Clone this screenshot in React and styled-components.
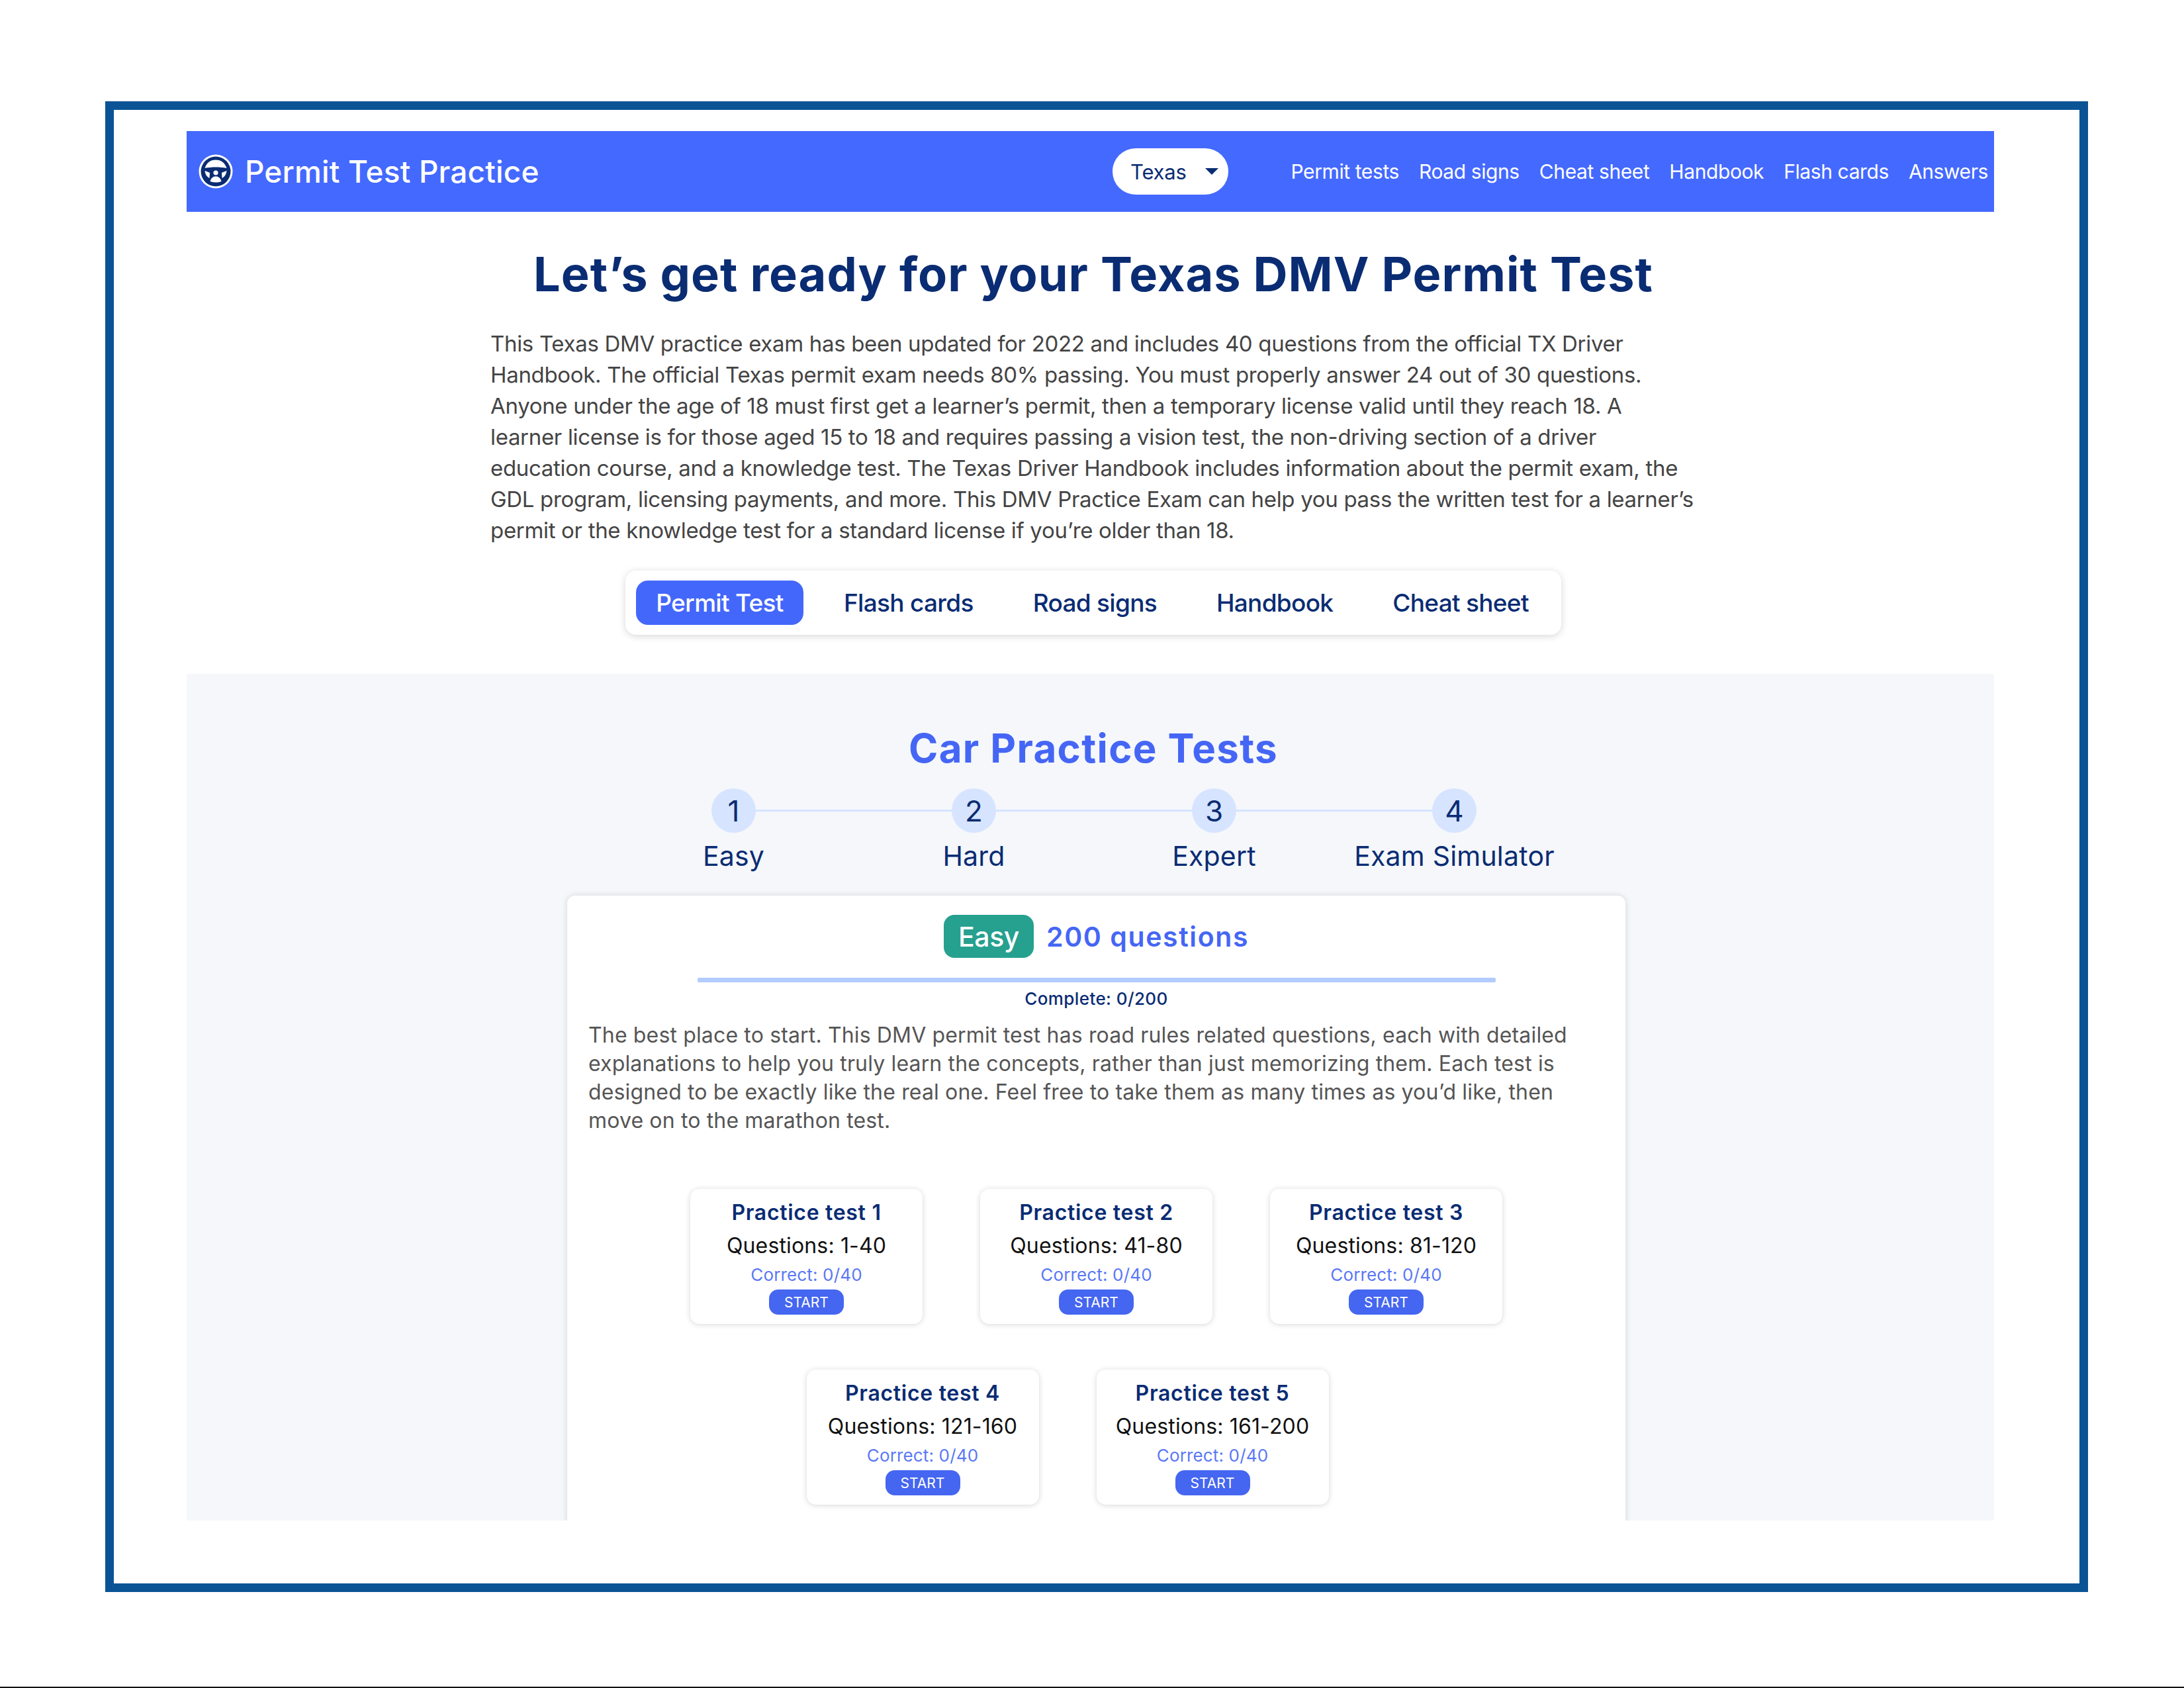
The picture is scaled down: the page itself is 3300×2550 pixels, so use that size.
import React from 'react';
import styled, { createGlobalStyle } from 'styled-components';

const Global = createGlobalStyle`
  html, body { margin: 0; padding: 0; background: #fff; }
  * { box-sizing: border-box; }
`;

const font = `Inter, "Liberation Sans", sans-serif`;
const NAVY = '#0a2c73';
const BLUE = '#4469ff';

/* ---------- Layout ---------- */
const Page = styled.div`
  width: 3300px;
  height: 2550px;
  padding: 153px 145px 0 159px;
  border-bottom: 2px solid #111;
  font-family: ${font};
  background: #fff;
`;

const Frame = styled.div`
  height: 2252px;
  border: 13px solid #0a5496;
  padding: 32px 129px 0 110px;
`;

/* ---------- Top bar ---------- */
const TopBar = styled.div`
  height: 122px;
  background: ${BLUE};
  display: flex;
  align-items: center;
  padding: 0 9px 0 18px;
`;

const Brand = styled.div`
  display: flex;
  align-items: center;
  gap: 18px;
  width: 1381px;
  color: #fff;
  font-size: 46px;
  font-weight: 500;
  letter-spacing: 0.15px;
`;

const StatePill = styled.div`
  width: 175px;
  height: 70px;
  border-radius: 35px;
  background: #fff;
  display: flex;
  align-items: center;
  padding-left: 27px;
  gap: 28px;
  color: ${NAVY};
  font-size: 31px;
  letter-spacing: -0.2px;
`;

const Caret = styled.span`
  width: 0;
  height: 0;
  border-left: 10px solid transparent;
  border-right: 10px solid transparent;
  border-top: 10px solid ${NAVY};
`;

const TopLinks = styled.nav`
  margin-left: auto;
  display: flex;
  gap: 30px;
  color: #fff;
  font-size: 30px;
  letter-spacing: -0.4px;
`;

/* ---------- Intro ---------- */
const Heading = styled.h1`
  margin: 50px 0 0;
  padding-left: 9px;
  text-align: center;
  color: ${NAVY};
  font-size: 72px;
  line-height: 88px;
  font-weight: 700;
  letter-spacing: 1px;
`;

const Intro = styled.div`
  margin: 38px 0 0 459px;
  color: #444;
  font-size: 33px;
  line-height: 47px;
  letter-spacing: -0.32px;
`;

const Line = styled.div`
  white-space: nowrap;
`;

const TabsRow = styled.div`
  display: flex;
  margin: 37px 0 59px 663px;
`;

const Tabs = styled.div`
  width: 1414px;
  height: 97px;
  background: #fff;
  border-radius: 16px;
  box-shadow: 0 2px 12px rgba(0, 0, 0, 0.16);
  display: flex;
  align-items: center;
  padding: 0 16px;
`;

const Tab = styled.div`
  flex-shrink: 0;
  color: ${(p) => (p.$active ? '#fff' : NAVY)};
  background: ${(p) => (p.$active ? '#4467fb' : 'transparent')};
  height: 67px;
  width: ${(p) => (p.$active ? '253px' : 'auto')};
  margin-right: ${(p) => (p.$active ? '16px' : '0')};
  display: flex;
  align-items: center;
  justify-content: center;
  padding: ${(p) => (p.$active ? '0' : '0 45px')};
  border-radius: 18px;
  font-size: 37px;
  font-weight: 500;
  letter-spacing: -0.7px;
  white-space: nowrap;
`;

/* ---------- Practice section ---------- */
const Section = styled.section`
  height: 1279px;
  background: #f5f7fb;
  overflow: hidden;
  padding-top: 77px;
`;

const SectionTitle = styled.h2`
  margin: 0;
  padding-left: 9px;
  text-align: center;
  color: #4566f5;
  font-size: 60px;
  line-height: 70px;
  font-weight: 700;
  letter-spacing: 1.35px;
`;

const Steps = styled.div`
  margin: 26px 0 0 645px;
  display: grid;
  grid-template-columns: repeat(4, 363px);
`;

const Step = styled.div`
  position: relative;
  display: flex;
  flex-direction: column;
  align-items: center;
  gap: 9px;
  color: ${NAVY};
  &:not(:last-child)::after {
    content: '';
    position: absolute;
    top: 32px;
    left: 50%;
    width: 100%;
    height: 3px;
    background: #d6e4ff;
  }
`;

const StepDot = styled.div`
  position: relative;
  z-index: 1;
  width: 67px;
  height: 67px;
  border-radius: 50%;
  background: #d6e4ff;
  display: flex;
  align-items: center;
  justify-content: center;
  font-size: 44px;
`;

const StepLabel = styled.div`
  font-size: 41px;
  line-height: 52px;
  letter-spacing: 0.2px;
  white-space: nowrap;
`;

const Panel = styled.div`
  margin: 34px 0 0 575px;
  width: 1599px;
  height: 1100px;
  background: #fff;
  border-radius: 12px 12px 0 0;
  box-shadow: 0 0 10px rgba(0, 0, 0, 0.14);
  padding: 29px 32px 0;
`;

const PanelHead = styled.div`
  display: flex;
  justify-content: center;
  align-items: center;
  gap: 19px;
`;

const Badge = styled.div`
  width: 136px;
  height: 65px;
  border-radius: 16px;
  background: #26a08f;
  color: #fff;
  font-size: 41px;
  font-weight: 500;
  letter-spacing: -0.4px;
  display: flex;
  align-items: center;
  justify-content: center;
`;

const QuestionCount = styled.div`
  color: #4566f5;
  font-size: 41px;
  font-weight: 600;
  letter-spacing: 1.6px;
`;

const Progress = styled.div`
  margin: 30px auto 0;
  width: 1206px;
  height: 7px;
  border-radius: 2px;
  background: #b3ccff;
`;

const Complete = styled.div`
  margin-top: 8px;
  text-align: center;
  color: ${NAVY};
  font-size: 26px;
  line-height: 34px;
  font-weight: 500;
  letter-spacing: 0.4px;
`;

const PanelText = styled.div`
  margin-top: 16px;
  color: #555;
  font-size: 32px;
  line-height: 43px;
  letter-spacing: 0.15px;
`;

const CardGrid = styled.div`
  margin-top: 82px;
  display: flex;
  flex-wrap: wrap;
  justify-content: center;
  gap: 69px 87px;
  width: 1535px;
`;

const Card = styled.div`
  width: 351px;
  height: 204px;
  background: #fff;
  border-radius: 14px;
  box-shadow: 0 1px 9px rgba(0, 0, 0, 0.16);
  display: flex;
  flex-direction: column;
  align-items: center;
  padding-top: 17px;
  &:last-child {
    margin-right: 87px;
  }
`;

const CardTitle = styled.div`
  color: ${NAVY};
  font-size: 32px;
  line-height: 38px;
  font-weight: 600;
  letter-spacing: 0.7px;
`;

const CardRange = styled.div`
  margin-top: 12px;
  color: #111;
  font-size: 32px;
  line-height: 38px;
  letter-spacing: 0.15px;
`;

const CardScore = styled.div`
  margin-top: 10px;
  color: #5a78f5;
  font-size: 26px;
  line-height: 30px;
  letter-spacing: 0.15px;
`;

const StartButton = styled.div`
  margin-top: 7px;
  width: 113px;
  height: 38px;
  border-radius: 14px;
  background: #4566f0;
  color: #fff;
  font-size: 21px;
  display: flex;
  align-items: center;
  justify-content: center;
`;

/* ---------- Logo ---------- */
const Logo = () => (
  <svg width="52" height="52" viewBox="0 0 52 52">
    <circle cx="26" cy="26" r="25.5" fill="#fff" />
    <circle cx="26" cy="26" r="22.5" fill={NAVY} />
    <path d="M9.5 21 C12 13 18 8.5 26 8.5 C34 8.5 40 13 42.5 21 C32 19 20 19 9.5 21 Z" fill="#fff" />
    <circle cx="26" cy="28" r="3.6" fill="#fff" />
    <path d="M9.5 25 C12 26 15 27 17 28 L16.5 36 C12.5 34 10 30 9.5 25 Z" fill="#fff" />
    <path d="M42.5 25 C40 26 37 27 35 28 L35.5 36 C39.5 34 42 30 42.5 25 Z" fill="#fff" />
    <path d="M17.5 41 C19 35 23 33.5 26 33.5 C29 33.5 33 35 34.5 41 C29 43 23 43 17.5 41 Z" fill="#fff" />
  </svg>
);

const topLinks = ['Permit tests', 'Road signs', 'Cheat sheet', 'Handbook', 'Flash cards', 'Answers'];
const tabs = ['Permit Test', 'Flash cards', 'Road signs', 'Handbook', 'Cheat sheet'];
const steps = ['Easy', 'Hard', 'Expert', 'Exam Simulator'];

const introLines = [
  'This Texas DMV practice exam has been updated for 2022 and includes 40 questions from the official TX Driver',
  'Handbook. The official Texas permit exam needs 80% passing. You must properly answer 24 out of 30 questions.',
  'Anyone under the age of 18 must first get a learner’s permit, then a temporary license valid until they reach 18. A',
  'learner license is for those aged 15 to 18 and requires passing a vision test, the non-driving section of a driver',
  'education course, and a knowledge test. The Texas Driver Handbook includes information about the permit exam, the',
  'GDL program, licensing payments, and more. This DMV Practice Exam can help you pass the written test for a learner’s',
  'permit or the knowledge test for a standard license if you’re older than 18.',
];

const panelLines = [
  'The best place to start. This DMV permit test has road rules related questions, each with detailed',
  'explanations to help you truly learn the concepts, rather than just memorizing them. Each test is',
  'designed to be exactly like the real one. Feel free to take them as many times as you’d like, then',
  'move on to the marathon test.',
];

const practiceTests = [
  { name: 'Practice test 1', range: '1-40' },
  { name: 'Practice test 2', range: '41-80' },
  { name: 'Practice test 3', range: '81-120' },
  { name: 'Practice test 4', range: '121-160' },
  { name: 'Practice test 5', range: '161-200' },
];

export default function App() {
  return (
    <Page>
      <Global />
      <Frame>
        <TopBar>
          <Brand>
            <Logo />
            Permit Test Practice
          </Brand>
          <StatePill>
            Texas
            <Caret />
          </StatePill>
          <TopLinks>
            {topLinks.map((l) => (
              <span key={l}>{l}</span>
            ))}
          </TopLinks>
        </TopBar>

        <Heading>Let’s get ready for your Texas DMV Permit Test</Heading>
        <Intro>
          {introLines.map((l) => (
            <Line key={l}>{l}</Line>
          ))}
        </Intro>

        <TabsRow>
          <Tabs>
            {tabs.map((t, i) => (
              <Tab key={t} $active={i === 0}>
                {t}
              </Tab>
            ))}
          </Tabs>
        </TabsRow>

        <Section>
          <SectionTitle>Car Practice Tests</SectionTitle>
          <Steps>
            {steps.map((s, i) => (
              <Step key={s}>
                <StepDot>{i + 1}</StepDot>
                <StepLabel>{s}</StepLabel>
              </Step>
            ))}
          </Steps>

          <Panel>
            <PanelHead>
              <Badge>Easy</Badge>
              <QuestionCount>200 questions</QuestionCount>
            </PanelHead>
            <Progress />
            <Complete>Complete: 0/200</Complete>
            <PanelText>
              {panelLines.map((l) => (
                <Line key={l}>{l}</Line>
              ))}
            </PanelText>
            <CardGrid>
              {practiceTests.map((t) => (
                <Card key={t.name}>
                  <CardTitle>{t.name}</CardTitle>
                  <CardRange>Questions: {t.range}</CardRange>
                  <CardScore>Correct: 0/40</CardScore>
                  <StartButton>START</StartButton>
                </Card>
              ))}
            </CardGrid>
          </Panel>
        </Section>
      </Frame>
    </Page>
  );
}
